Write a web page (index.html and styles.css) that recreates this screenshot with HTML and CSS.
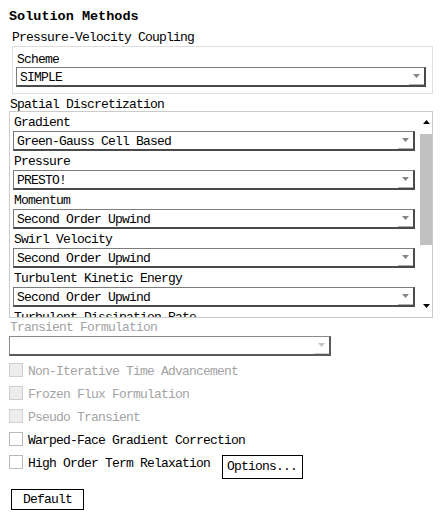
FILE: index.html
```html
<!DOCTYPE html>
<html>
<head>
<meta charset="utf-8">
<link rel="stylesheet" href="styles.css">
</head>
<body>
<div class="title">Solution Methods</div>
<div class="lbl-top">Pressure-Velocity Coupling</div>
<div class="group">
  <div class="flabel">Scheme</div>
  <div class="select sel-scheme"><span class="val">SIMPLE</span><i class="arrow"><svg width="7" height="4" viewBox="0 0 7 4"><polygon points="0,0 7,0 3.5,4" fill="#858585"/></svg></i></div>
</div>
<div class="lbl-spatial">Spatial Discretization</div>
<div class="scrollbox">
  <div class="scroll-content">
    <div class="field-label">Gradient</div>
    <div class="select sel-field"><span class="val">Green-Gauss Cell Based</span><i class="arrow"><svg width="7" height="4" viewBox="0 0 7 4"><polygon points="0,0 7,0 3.5,4" fill="#858585"/></svg></i></div>
    <div class="field-label">Pressure</div>
    <div class="select sel-field"><span class="val">PRESTO!</span><i class="arrow"><svg width="7" height="4" viewBox="0 0 7 4"><polygon points="0,0 7,0 3.5,4" fill="#858585"/></svg></i></div>
    <div class="field-label">Momentum</div>
    <div class="select sel-field"><span class="val">Second Order Upwind</span><i class="arrow"><svg width="7" height="4" viewBox="0 0 7 4"><polygon points="0,0 7,0 3.5,4" fill="#858585"/></svg></i></div>
    <div class="field-label">Swirl Velocity</div>
    <div class="select sel-field"><span class="val">Second Order Upwind</span><i class="arrow"><svg width="7" height="4" viewBox="0 0 7 4"><polygon points="0,0 7,0 3.5,4" fill="#858585"/></svg></i></div>
    <div class="field-label">Turbulent Kinetic Energy</div>
    <div class="select sel-field"><span class="val">Second Order Upwind</span><i class="arrow"><svg width="7" height="4" viewBox="0 0 7 4"><polygon points="0,0 7,0 3.5,4" fill="#858585"/></svg></i></div>
    <div class="field-label">Turbulent Dissipation Rate</div>
  </div>
  <div class="scrollbar">
    <div class="sb-up"><svg width="7" height="4" viewBox="0 0 7 4"><polygon points="0,4 7,4 3.5,0" fill="#000"/></svg></div>
    <div class="sb-track"><div class="sb-thumb"></div></div>
    <div class="sb-down"><svg width="7" height="4" viewBox="0 0 7 4"><polygon points="0,0 7,0 3.5,4" fill="#000"/></svg></div>
  </div>
</div>
<div class="lbl-trans">Transient Formulation</div>
<div class="select sel-trans"><span class="val"></span><i class="arrow"><svg width="7" height="4" viewBox="0 0 7 4"><polygon points="0,0 7,0 3.5,4" fill="#c4c4c4"/></svg></i></div>
<div class="checks">
  <div class="check disabled"><span class="box"></span><span class="ctext">Non-Iterative Time Advancement</span></div>
  <div class="check disabled"><span class="box"></span><span class="ctext">Frozen Flux Formulation</span></div>
  <div class="check disabled"><span class="box"></span><span class="ctext">Pseudo Transient</span></div>
  <div class="check"><span class="box"></span><span class="ctext">Warped-Face Gradient Correction</span></div>
  <div class="check"><span class="box"></span><span class="ctext">High Order Term Relaxation</span><button class="btn btn-options">Options...</button></div>
</div>
<button class="btn btn-default">Default</button>
</body>
</html>
```

FILE: styles.css
```css
html, body {
  margin: 0;
  padding: 0;
  background: #fff;
}
body {
  width: 442px;
  height: 517px;
  overflow: hidden;
  font-family: "Liberation Mono", "DejaVu Sans Mono", monospace;
  font-size: 13px;
  letter-spacing: -0.8px;
  color: #000;
}
.title {
  margin: 8px 0 0 9px;
  font-size: 13.5px;
  font-weight: bold;
  letter-spacing: 0;
  line-height: 17px;
  height: 17px;
}
.lbl-top {
  margin: 4px 0 0 12px;
  height: 17px;
  line-height: 17px;
}
.group {
  margin-left: 12px;
  width: 421px;
  box-sizing: border-box;
  border: 1px solid #dedede;
  padding: 6px 6px 6px 3px;
}
.flabel {
  height: 14px;
  line-height: 14px;
  padding-left: 1px;
}
.select {
  height: 20px;
  box-sizing: border-box;
  border-top: 1px solid #7c7c7c;
  border-left: 1px solid #7c7c7c;
  border-right: 2px solid #4a4a4a;
  border-bottom: 2px solid #4a4a4a;
  display: flex;
  align-items: flex-start;
  background: #fff;
  white-space: nowrap;
}
.select .val {
  padding: 1px 0 0 3px;
  line-height: 17px;
  height: 16px;
}
.select .arrow {
  margin-left: auto;
  width: 15px;
  height: 17px;
  box-sizing: border-box;
  border-bottom: 1px solid #b0b0b0;
  display: flex;
  align-items: center;
  justify-content: center;
}
.select .arrow svg {
  display: block;
}
.sel-scheme {
  width: 410px;
}
.lbl-spatial {
  margin-left: 10px;
  padding-top: 5px;
  height: 12px;
  line-height: 12px;
}
.scrollbox {
  margin-left: 9px;
  width: 424px;
  height: 207px;
  box-sizing: border-box;
  border: 1px solid #cbcbcb;
  display: flex;
}
.scroll-content {
  width: 410px;
  height: 205px;
  box-sizing: border-box;
  padding: 0 5px 0 3px;
  overflow: hidden;
}
.field-label {
  padding-top: 3px;
  height: 16px;
  line-height: 16px;
  padding-left: 1px;
  white-space: nowrap;
}
.sel-field {
  width: 402px;
}
.scrollbar {
  width: 12px;
  height: 205px;
  display: flex;
  flex-direction: column;
}
.scrollbar svg {
  display: block;
  margin-left: 3px;
}
.sb-up {
  height: 22px;
  padding-top: 8px;
  box-sizing: border-box;
}
.sb-track {
  flex: 1;
}
.sb-thumb {
  height: 111px;
  background: #c1c1c1;
}
.sb-down {
  height: 18px;
  padding-top: 5px;
  box-sizing: border-box;
}
.lbl-trans {
  margin-left: 10px;
  padding: 3px 0 1px 0;
  height: 14px;
  line-height: 14px;
  color: #a3a3a3;
}
.sel-trans {
  margin-left: 9px;
  width: 322px;
  border-top-color: #8a8a8a;
  border-left-color: #8a8a8a;
  border-right-color: #5a5a5a;
  border-bottom-color: #5a5a5a;
}
.sel-trans .arrow {
  border-bottom-color: #d0d0d0;
}
.checks {
  margin: 3px 0 0 9px;
}
.check {
  display: flex;
  align-items: flex-start;
  height: 23px;
  white-space: nowrap;
}
.box {
  width: 14px;
  height: 14px;
  box-sizing: border-box;
  border: 1px solid #b8b8b8;
  background: #fff;
  margin: 4px 5px 0 0;
  flex: none;
}
.ctext {
  margin-top: 2px;
  line-height: 21px;
}
.check.disabled {
  color: #a3a3a3;
}
.check.disabled .box {
  background: #ececec;
  border-color: #cfcfcf;
}
.btn {
  font-family: inherit;
  font-size: 13px;
  letter-spacing: -0.8px;
  color: #000;
  background: #fff;
  border: 1px solid #000;
  box-sizing: border-box;
  margin: 0;
  white-space: nowrap;
}
.btn-options {
  margin: 4px 0 0 12px;
  width: 81px;
  height: 24px;
  padding: 0 0 0 4px;
  text-align: left;
  line-height: 22px;
}
.btn-default {
  display: block;
  margin: 15px 0 0 11px;
  width: 73px;
  height: 21px;
  padding: 0;
  text-align: center;
  line-height: 19px;
}
```
